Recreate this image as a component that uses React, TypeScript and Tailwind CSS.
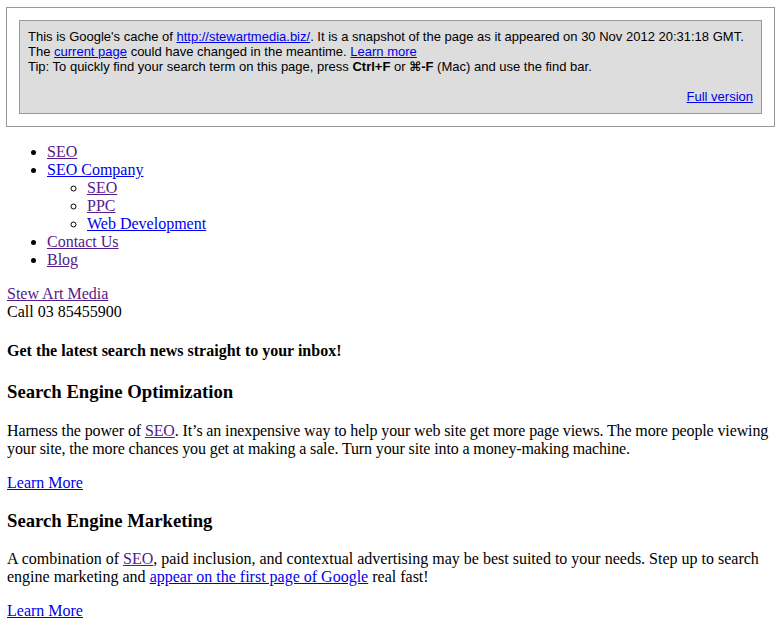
const visited = "text-[#551a8b] underline";
const link = "text-[#0000ee] underline";

const CacheHeader = () => (
  <div className="-mx-px border border-[#999] bg-white">
    <div className="m-3 border border-[#999] bg-[#ddd] px-2 pt-2 pb-[9px] text-left text-[13px] leading-[15px] text-black font-['Liberation_Sans','DejaVu_Sans',Arial,sans-serif]">
      <div>
        This is Google's cache of{" "}
        <a href="#" className={link}>http://stewartmedia.biz/</a>. It is a snapshot of the page as it appeared on 30 Nov 2012 20:31:18 GMT.
        <br />
        The <a href="#" className={link}>current page</a> could have changed in the meantime.{" "}
        <a href="#" className={link}>Learn more</a>
        <br />
        Tip: To quickly find your search term on this page, press <b>Ctrl+F</b> or <b>⌘-F</b> (Mac) and use the find bar.
        <br />
        <br />
      </div>
      <div className="text-right">
        <a href="#" className={link}>Full version</a>
      </div>
    </div>
  </div>
);

const App = () => {
  return (
    <div className="min-h-screen bg-white px-[7px] pt-[7px] pb-4 text-[16px] leading-[18px] text-black font-['Liberation_Serif','Times_New_Roman',serif]">
      <CacheHeader />

      <ul className="my-4 list-disc pl-10">
        <li><a href="#" className={visited}>SEO</a></li>
        <li>
          <a href="#" className={link}>SEO Company</a>
          <ul className="list-[circle] pl-10">
            <li><a href="#" className={visited}>SEO</a></li>
            <li><a href="#" className={visited}>PPC</a></li>
            <li><a href="#" className={link}>Web Development</a></li>
          </ul>
        </li>
        <li><a href="#" className={visited}>Contact Us</a></li>
        <li><a href="#" className={visited}>Blog</a></li>
      </ul>

      <div>
        <a href="#" className={visited}>Stew Art Media</a>
      </div>
      <div>Call 03 85455900</div>

      <h4 className="my-[21px] font-bold">Get the latest search news straight to your inbox!</h4>

      <h3 className="my-[19px] text-[18.72px] leading-[21.5px] font-bold">Search Engine Optimization</h3>
      <p className="my-4 tracking-[-0.12px]">
        Harness the power of <a href="#" className={visited}>SEO</a>. It’s an inexpensive way to help your web site get more page views. The more people viewing your site, the more chances you get at making a sale. Turn your site into a money-making machine.
      </p>
      <p className="my-4">
        <a href="#" className={link}>Learn More</a>
      </p>

      <h3 className="mt-[18px] mb-[19px] text-[18.72px] leading-[21.5px] font-bold">Search Engine Marketing</h3>
      <p className="my-4">
        A combination of <a href="#" className={visited}>SEO</a>, paid inclusion, and contextual advertising may be best suited to your needs. Step up to search engine marketing and{" "}
        <a href="#" className={link}>appear on the first page of Google</a> real fast!
      </p>
      <p className="my-4">
        <a href="#" className={link}>Learn More</a>
      </p>
    </div>
  );
};

export default App;
